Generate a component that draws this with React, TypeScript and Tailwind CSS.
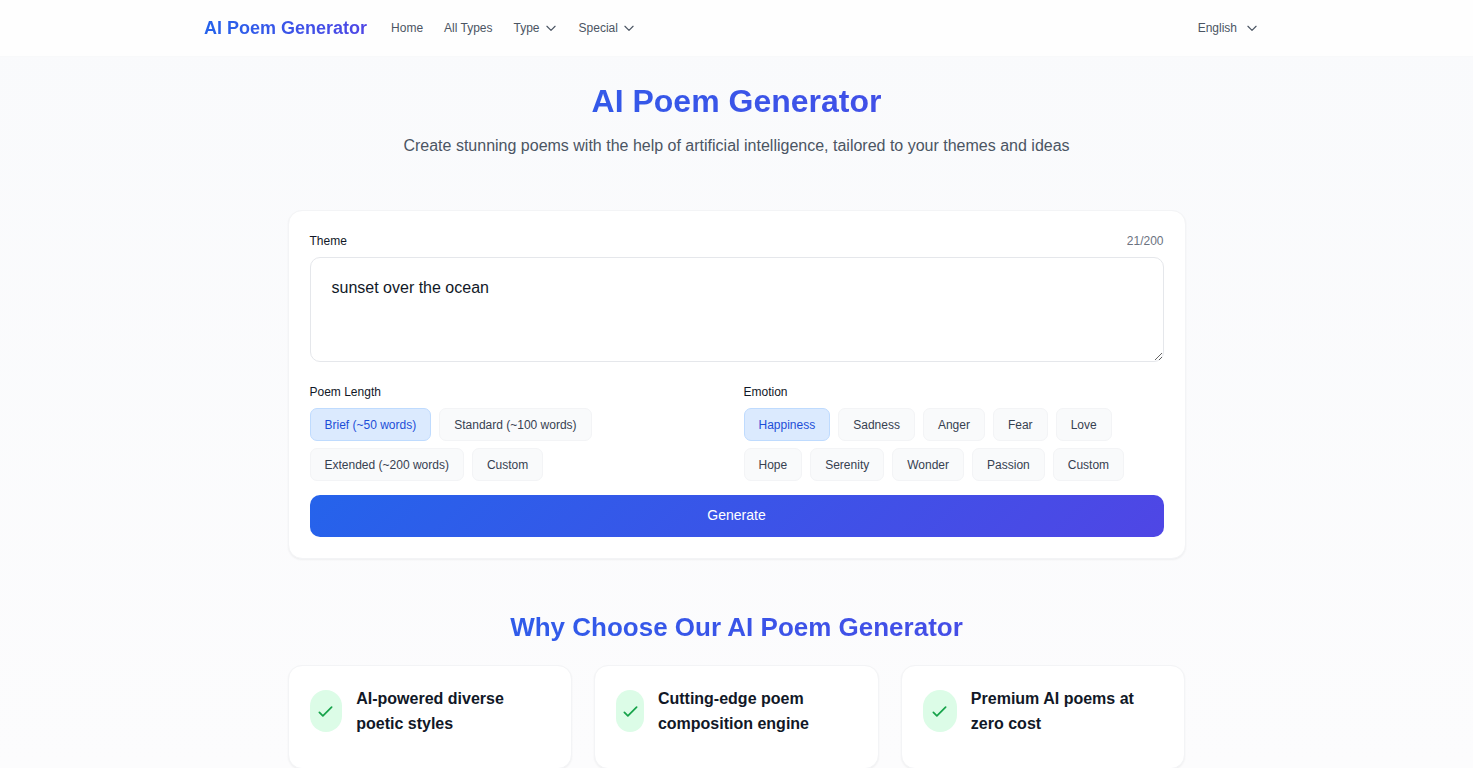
import clsx from "clsx";
import { useState } from "react";

const lengths = [
	"Brief (~50 words)",
	"Standard (~100 words)",
	"Extended (~200 words)",
	"Custom",
];

const emotions = [
	"Happiness",
	"Sadness",
	"Anger",
	"Fear",
	"Love",
	"Hope",
	"Serenity",
	"Wonder",
	"Passion",
	"Custom",
];

const features = [
	"AI-powered diverse poetic styles",
	"Cutting-edge poem composition engine",
	"Premium AI poems at zero cost",
];

function ChevronDown() {
	return (
		<svg
			className="size-3.5 shrink-0"
			fill="none"
			stroke="currentColor"
			strokeWidth={2}
			strokeLinecap="round"
			strokeLinejoin="round"
			viewBox="0 0 24 24"
			aria-hidden="true"
		>
			<path d="M19 9l-7 7-7-7" />
		</svg>
	);
}

function Header() {
	return (
		<header className="sticky top-0 z-10 border-b border-[#f8f9fa] bg-[#fefefe]">
			<div className="mx-auto flex h-14 max-w-[1121px] items-center justify-between px-7">
				<div className="flex items-center gap-6">
					<a
						href="#"
						className="bg-linear-to-r/srgb from-[#2563eb] to-[#4f46e5] bg-clip-text text-[18px] leading-6 font-bold text-transparent"
					>
						AI Poem Generator
					</a>
					<nav className="flex items-center gap-[21px] text-xs text-[#4b5563]">
						<a href="#">Home</a>
						<a href="#">All Types</a>
						<button type="button" className="flex items-center gap-1">
							Type
							<ChevronDown />
						</button>
						<button type="button" className="flex items-center gap-1">
							Special
							<ChevronDown />
						</button>
					</nav>
				</div>
				<button
					type="button"
					className="flex items-center gap-2 px-2.5 text-xs text-[#4b5563]"
				>
					English
					<ChevronDown />
				</button>
			</div>
		</header>
	);
}

interface ChipGroupProps {
	label: string;
	options: string[];
	value: string;
	onChange: (value: string) => void;
}

function ChipGroup({ label, options, value, onChange }: ChipGroupProps) {
	return (
		<div role="group" aria-label={label}>
			<p className="mb-[7px] text-xs leading-[18px] text-[#111827]">{label}</p>
			<div className="flex flex-wrap gap-x-2 gap-y-[7px]">
				{options.map((option) => (
					<button
						key={option}
						type="button"
						aria-pressed={option === value}
						onClick={() => onChange(option)}
						className={clsx(
							"h-[33px] rounded-[7px] border px-3.5 text-xs",
							option === value
								? "border-[#bfdbfe] bg-[#dbeafe] text-[#1d4ed8]"
								: "border-[#f3f4f6] bg-[#f9fafb] text-[#374151]",
						)}
					>
						{option}
					</button>
				))}
			</div>
		</div>
	);
}

function PoemForm() {
	const [theme, setTheme] = useState("sunset over the ocean");
	const [length, setLength] = useState(lengths[0]);
	const [emotion, setEmotion] = useState(emotions[0]);

	return (
		<form
			onSubmit={(e) => e.preventDefault()}
			className="rounded-[14px] border border-[#f3f4f6] bg-white p-[21px] shadow-xs"
		>
			<div className="mb-[7px] flex items-center justify-between text-xs leading-[18px]">
				<label htmlFor="theme" className="text-[#111827]">
					Theme
				</label>
				<span className="text-[#6b7280]">{theme.length}/200</span>
			</div>
			<textarea
				id="theme"
				maxLength={200}
				value={theme}
				onChange={(e) => setTheme(e.target.value)}
				className="block h-[105px] w-full resize-y rounded-[10px] border border-[#e5e7eb] bg-white px-[21px] py-[17px] text-base leading-[25px] text-[#111827] outline-none"
			/>
			<div className="mt-[21px] grid grid-cols-2 gap-3.5">
				<ChipGroup
					label="Poem Length"
					options={lengths}
					value={length}
					onChange={setLength}
				/>
				<ChipGroup
					label="Emotion"
					options={emotions}
					value={emotion}
					onChange={setEmotion}
				/>
			</div>
			<button
				type="submit"
				className="mt-3.5 flex h-[42px] w-full items-center justify-center rounded-[10px] bg-[linear-gradient(135deg,#2563eb,#4f46e5)] pb-0.5 text-sm text-white"
			>
				Generate
			</button>
		</form>
	);
}

function FeatureCard({ title }: { title: string }) {
	return (
		<div className="rounded-[14px] border border-[#f3f4f6] bg-white px-[21px] py-5 shadow-xs">
			<div className="mb-3 flex items-center gap-3.5">
				<div className="flex h-[42px] w-[42px] items-center justify-center rounded-full bg-[#dcfce7]">
					<svg
						className="size-[21px] shrink-0 text-[#16a34a]"
						fill="none"
						stroke="currentColor"
						strokeWidth={2}
						strokeLinecap="round"
						strokeLinejoin="round"
						viewBox="0 0 24 24"
						aria-hidden="true"
					>
						<path d="M5 13l4 4L19 7" />
					</svg>
				</div>
				<h3 className="text-base leading-[25px] font-bold text-[#111827]">
					{title}
				</h3>
			</div>
		</div>
	);
}

export default function App() {
	return (
		<div className="min-h-screen bg-linear-to-b from-[#f9fafc] to-[#fcfcfd] font-['Liberation_Sans',Arial,sans-serif]">
			<Header />
			<main className="mx-auto max-w-[898px] pt-6">
				<div className="mb-[52px] text-center">
					<h1 className="bg-linear-to-r/srgb from-[#2563eb] to-[#4f46e5] bg-clip-text text-[32px] leading-10 font-bold text-transparent">
						AI Poem Generator
					</h1>
					<p className="mt-3 text-base leading-[25px] text-[#4b5563]">
						Create stunning poems with the help of artificial intelligence,
						tailored to your themes and ideas
					</p>
				</div>
				<PoemForm />
				<section className="mt-[52px]">
					<h2 className="mb-[22px] bg-linear-to-r/srgb from-[#2563eb] to-[#4f46e5] bg-clip-text text-center text-[26px] leading-8 font-bold text-transparent">
						Why Choose Our AI Poem Generator
					</h2>
					<div className="grid grid-cols-3 gap-[22px]">
						{features.map((title) => (
							<FeatureCard key={title} title={title} />
						))}
					</div>
				</section>
			</main>
		</div>
	);
}
